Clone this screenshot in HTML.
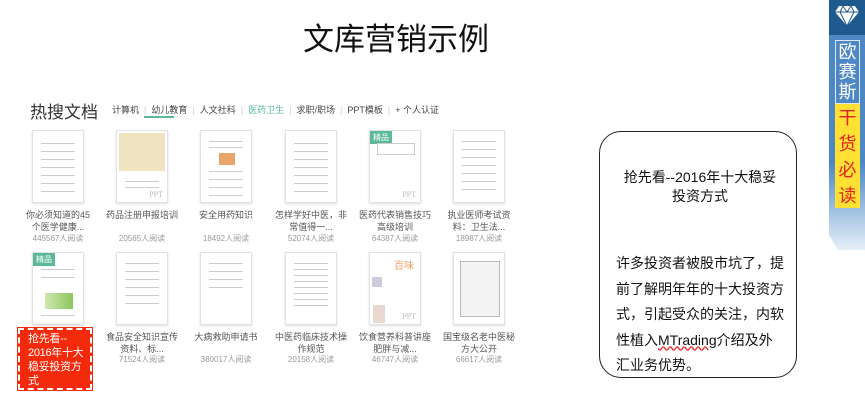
<!DOCTYPE html><html><head><meta charset="utf-8"><style>
*{margin:0;padding:0;box-sizing:border-box}
body{width:865px;height:408px;background:#fff;position:relative;overflow:hidden;font-family:"Liberation Sans","Noto Sans CJK SC",sans-serif;color:#333}
.a{position:absolute}
.t{font-size:9px;color:#555;text-align:center;width:84px;line-height:12px}
.r{font-size:8px;color:#999;text-align:center;width:84px}
.th{position:absolute;width:52px;height:73px;border:1px solid #e2e2e2;background:#fff;box-shadow:0 1px 2px #ddd;overflow:hidden}
.th i{position:absolute;left:8px;right:8px;height:1px;background:#ccc}
.jp{position:absolute;left:0;top:0;background:#5bb89a;color:#fff;font-size:8px;padding:1px 3px}
.ppt{position:absolute;right:4px;bottom:3px;font-size:8px;color:#bbb;font-family:"Liberation Serif",serif}
</style></head><body>
<div class="a" style="left:303px;top:14px;font-size:31px;color:#111;letter-spacing:0">文库营销示例</div>
<div class="a" style="left:30px;top:98px;font-size:17px;color:#333">热搜文档</div>
<div class="a" style="left:112px;top:103px;font-size:9px;color:#444;white-space:nowrap">计算机 <span style="color:#ccc">&nbsp;|&nbsp;</span> 幼儿教育 <span style="color:#ccc">&nbsp;|&nbsp;</span> 人文社科 <span style="color:#ccc">&nbsp;|&nbsp;</span> <span style="color:#5bb89a">医药卫生</span> <span style="color:#ccc">&nbsp;|&nbsp;</span> 求职/职场 <span style="color:#ccc">&nbsp;|&nbsp;</span> PPT模板 <span style="color:#ccc">&nbsp;|&nbsp;</span> + 个人认证</div>
<div class="a" style="left:144px;top:116px;width:30px;height:2px;background:#5bb89a"></div>

<div class="th" style="left:32px;top:130px"><i style="top:12px"></i><i style="top:20px"></i><i style="top:28px"></i><i style="top:36px"></i><i style="top:44px"></i><i style="top:52px"></i><i style="top:60px"></i></div>
<div class="th" style="left:116px;top:130px"><div style="position:absolute;left:2px;right:2px;top:2px;height:38px;background:#efe3c2"></div><i style="top:50px"></i><i style="top:56px"></i><div class="ppt">PPT</div></div>
<div class="th" style="left:200px;top:130px"><i style="top:10px"></i><i style="top:16px"></i><div style="position:absolute;left:18px;top:22px;width:16px;height:12px;background:#e9a46a"></div><i style="top:40px"></i><i style="top:48px"></i><i style="top:56px"></i><i style="top:64px"></i></div>
<div class="th" style="left:285px;top:130px"><i style="top:12px"></i><i style="top:20px"></i><i style="top:28px"></i><i style="top:36px"></i><i style="top:44px"></i><i style="top:52px"></i><i style="top:60px"></i></div>
<div class="th" style="left:369px;top:130px"><div class="jp">精品</div><div style="position:absolute;left:7px;top:12px;width:38px;height:12px;border:1px solid #ccc"></div><div class="ppt">PPT</div></div>
<div class="th" style="left:453px;top:130px"><i style="top:10px"></i><i style="top:18px"></i><i style="top:26px"></i><i style="top:34px"></i><i style="top:42px"></i><i style="top:50px"></i><i style="top:58px"></i></div>

<div class="a t" style="left:16px;top:209px">你必须知道的45<br>个医学健康...</div><div class="a r" style="left:16px;top:233px">445567人阅读</div>
<div class="a t" style="left:100px;top:209px">药品注册申报培训</div><div class="a r" style="left:100px;top:233px">20565人阅读</div>
<div class="a t" style="left:184px;top:209px">安全用药知识</div><div class="a r" style="left:184px;top:233px">18492人阅读</div>
<div class="a t" style="left:269px;top:209px">怎样学好中医，非<br>常值得一...</div><div class="a r" style="left:269px;top:233px">52074人阅读</div>
<div class="a t" style="left:353px;top:209px">医药代表销售技巧<br>高级培训</div><div class="a r" style="left:353px;top:233px">64387人阅读</div>
<div class="a t" style="left:437px;top:209px">执业医师考试资<br>料：卫生法...</div><div class="a r" style="left:437px;top:233px">18987人阅读</div>

<div class="th" style="left:32px;top:252px"><div class="jp">精品</div><i style="top:16px"></i><i style="top:24px"></i><div style="position:absolute;left:12px;top:40px;width:28px;height:16px;background:linear-gradient(90deg,#cfe8b0,#8cc55e)"></div><i style="top:62px"></i></div>
<div class="th" style="left:116px;top:252px"><i style="top:10px"></i><i style="top:18px"></i><i style="top:26px"></i><i style="top:34px"></i><i style="top:42px"></i><i style="top:50px"></i></div>
<div class="th" style="left:200px;top:252px"><i style="top:10px"></i><i style="top:18px"></i><i style="top:26px"></i><i style="top:34px"></i></div>
<div class="th" style="left:285px;top:252px"><i style="top:10px"></i><i style="top:16px"></i><i style="top:22px"></i><i style="top:28px"></i><i style="top:34px"></i><i style="top:40px"></i><i style="top:46px"></i><i style="top:52px"></i></div>
<div class="th" style="left:369px;top:252px"><div style="position:absolute;left:24px;top:4px;width:22px;height:14px;color:#f0a070;font-size:10px">百味</div><div style="position:absolute;left:2px;top:24px;width:10px;height:10px;background:#ccd"></div><div style="position:absolute;left:3px;top:52px;width:12px;height:18px;background:#e8d8d0"></div><div class="ppt">PPT</div></div>
<div class="th" style="left:453px;top:252px"><div style="position:absolute;left:6px;top:8px;width:40px;height:56px;border:1px solid #bbb;background:#f4f4f4"></div></div>

<div class="a" style="left:18px;top:328px;width:74px;height:62px;background:#f42a0c;border:2px dashed #fff;outline:1px solid #f42a0c;color:#fff;font-size:11px;line-height:14px;padding:2px 0 0 8px;white-space:nowrap;letter-spacing:-0.3px">抢先看--<br>2016年十大<br>稳妥投资方<br>式</div>
<div class="a t" style="left:100px;top:331px">食品安全知识宣传<br>资料、标...</div><div class="a r" style="left:100px;top:354px">71524人阅读</div>
<div class="a t" style="left:184px;top:331px">大病救助申请书</div><div class="a r" style="left:184px;top:354px">380017人阅读</div>
<div class="a t" style="left:269px;top:331px">中医药临床技术操<br>作规范</div><div class="a r" style="left:269px;top:354px">20158人阅读</div>
<div class="a t" style="left:353px;top:331px">饮食营养科普讲座<br>肥胖与减...</div><div class="a r" style="left:353px;top:354px">46747人阅读</div>
<div class="a t" style="left:437px;top:331px">国宝级名老中医秘<br>方大公开</div><div class="a r" style="left:437px;top:354px">66617人阅读</div>

<div class="a" style="left:599px;top:131px;width:198px;height:247px;border:1.5px solid #222;border-radius:22px"></div>
<div class="a" style="left:605px;top:168px;width:190px;text-align:center;font-size:14px;line-height:19px;color:#111;white-space:nowrap">抢先看--2016年十大稳妥<br>投资方式</div>
<div class="a" style="left:616px;top:251px;width:180px;font-size:14px;line-height:25.5px;color:#111;white-space:nowrap">许多投资者被股市坑了，提<br>前了解明年年的十大投资方<br>式，引起受众的关注，内软<br>性植入<span style="text-decoration:underline wavy #e33">MTrading</span>介绍及外<br>汇业务优势。</div>

<div class="a" style="left:829px;top:0;width:36px;height:35px;background:#1f5a8e"></div>
<svg class="a" style="left:834px;top:5px" width="26" height="22" viewBox="0 0 26 22"><path d="M5 1h16l4 6-12 14L1 7z" fill="#fff"/><path d="M1 7h24M9 1l-3 6 7 14M17 1l3 6-7 14M9 1l4 6 4-6" stroke="#1f5a8e" stroke-width="1" fill="none"/></svg>
<div class="a" style="left:829px;top:35px;width:36px;height:215px;background:linear-gradient(#4d88c4 0,#4d88c4 60%,#e6f0fa 100%);clip-path:polygon(0 0,100% 0,100% 100%,25% 100%,0 93%)"></div>
<div class="a" style="left:835px;top:40px;width:25px;height:64px;border:1px solid #dfeaf5;color:#fff;font-size:18px;line-height:20px;text-align:center;padding-top:1px">欧<br>赛<br>斯</div>
<div class="a" style="left:835px;top:104px;width:25px;height:104px;background:#ffe033;color:#e4201c;font-size:18px;line-height:26px;text-align:center;padding-top:1px">干<br>货<br>必<br>读</div>
</body></html>
